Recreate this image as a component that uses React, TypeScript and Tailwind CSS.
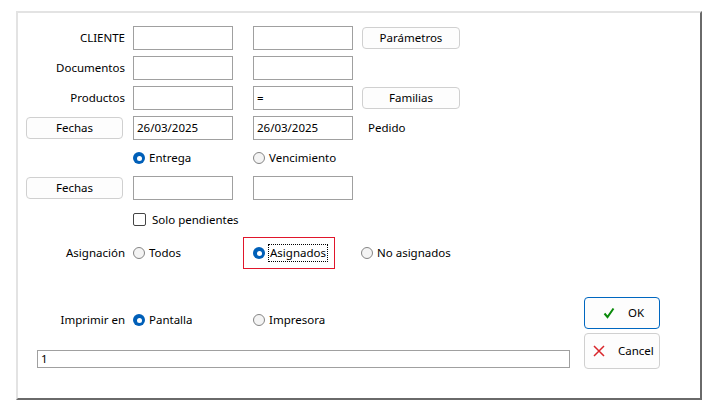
import React from "react";

const Label = ({ children }: { children: React.ReactNode }) => (
  <div className="w-[99px] mr-[8px] text-right shrink-0">{children}</div>
);

const Field = ({ value = "", w = "w-[100px]" }: { value?: string; w?: string }) => (
  <div className={`${w} h-[24px] border border-[#a0a0a0] bg-white pl-[3px] flex items-center shrink-0`}>
    {value}
  </div>
);

const Btn = ({ children, className = "" }: { children: React.ReactNode; className?: string }) => (
  <div
    className={`h-[22px] rounded-[4px] border border-[#d0d0d0] bg-[#fdfdfd] flex items-center justify-center shrink-0 ${className}`}
  >
    {children}
  </div>
);

const Radio = ({ checked, label, focus }: { checked?: boolean; label: string; focus?: boolean }) => (
  <div className="flex items-center">
    {checked ? (
      <span className="w-[12px] h-[12px] rounded-full bg-[#005fb8] flex items-center justify-center">
        <span className="w-[5px] h-[5px] rounded-full bg-white" />
      </span>
    ) : (
      <span className="w-[12px] h-[12px] rounded-full border border-[#858585] bg-[#f4f4f4]" />
    )}
    <span className={`ml-[3px] leading-[16px] ${focus ? "border border-dotted border-black px-[1px]" : "ml-[4px]"}`}>
      {label}
    </span>
  </div>
);

export default function App() {
  return (
    <div
      className="w-[717px] h-[408px] bg-white text-[11.5px] text-[#000] overflow-hidden"
      style={{ fontFamily: '"Noto Sans", "Open Sans", sans-serif' }}
    >
      <div className="ml-[16px] mt-[11px] w-[686px] h-[389px] border-2 border-[#e3e3e3] border-r-[#6a6a6a] border-b-[#6a6a6a]">
        <div className="pl-[8px] pt-[13px]">
          {/* Cliente */}
          <div className="flex items-center h-[24px]">
            <Label>CLIENTE</Label>
            <Field />
            <div className="ml-[20px]">
              <Field />
            </div>
            <Btn className="ml-[9px] w-[98px]">Parámetros</Btn>
          </div>
          {/* Documentos */}
          <div className="flex items-center h-[24px] mt-[6px]">
            <Label>Documentos</Label>
            <Field />
            <div className="ml-[20px]">
              <Field />
            </div>
          </div>
          {/* Productos */}
          <div className="flex items-center h-[24px] mt-[6px]">
            <Label>Productos</Label>
            <Field />
            <div className="ml-[20px]">
              <Field value="=" />
            </div>
            <Btn className="ml-[9px] w-[98px]">Familias</Btn>
          </div>
          {/* Fechas 1 */}
          <div className="flex items-center h-[24px] mt-[6px]">
            <Btn className="w-[97px] mr-[10px]">Fechas</Btn>
            <Field value="26/03/2025" />
            <div className="ml-[20px]">
              <Field value="26/03/2025" />
            </div>
            <span className="ml-[15px]">Pedido</span>
          </div>
          {/* Entrega / Vencimiento */}
          <div className="flex items-center h-[16px] mt-[10px] pl-[107px]">
            <div className="w-[120px]">
              <Radio checked label="Entrega" />
            </div>
            <Radio label="Vencimiento" />
          </div>
          {/* Fechas 2 */}
          <div className="flex items-center h-[24px] mt-[10px]">
            <Btn className="w-[97px] mr-[10px]">Fechas</Btn>
            <Field />
            <div className="ml-[20px]">
              <Field />
            </div>
          </div>
          {/* Solo pendientes */}
          <div className="flex items-center h-[17px] mt-[11px] pl-[107px]">
            <span className="w-[13px] h-[13px] rounded-[2px] border-[1.5px] border-[#444] bg-white" />
            <span className="ml-[6px]">Solo pendientes</span>
          </div>
          {/* Asignacion */}
          <div className="flex items-center h-[32px] mt-[9px]">
            <Label>Asignación</Label>
            <div className="w-[110px]">
              <Radio label="Todos" />
            </div>
            <div className="w-[92px] h-[32px] border border-[#e0162b] pl-[9px] flex items-center">
              <Radio checked focus label="Asignados" />
            </div>
            <div className="ml-[26px]">
              <Radio label="No asignados" />
            </div>
          </div>
          {/* Bottom */}
          <div className="flex mt-[28px]">
            <div className="w-[544px]">
              <div className="flex items-center h-[16px] mt-[15px]">
                <Label>Imprimir en</Label>
                <div className="w-[120px]">
                  <Radio checked label="Pantalla" />
                </div>
                <Radio label="Impresora" />
              </div>
              <div className="ml-[11px] mt-[22px] w-[533px] h-[18px] border border-[#a0a0a0] pl-[3px] flex items-center">
                1
              </div>
            </div>
            <div className="ml-[14px] w-[76px] flex flex-col gap-[4px]">
              <div className="h-[32px] rounded-[4px] border border-[#0067c0] bg-[#fdfdfd] flex items-center pl-[18px]">
                <svg width="12" height="12" viewBox="0 0 12 12">
                  <path d="M1.5 6.5 L4.5 10 L10.5 1.5" fill="none" stroke="#0a8a0a" strokeWidth="2" />
                </svg>
                <span className="ml-[13px]">OK</span>
              </div>
              <div className="h-[36px] rounded-[4px] border border-[#d0d0d0] bg-[#fdfdfd] flex items-center pl-[8px]">
                <svg width="12" height="12" viewBox="0 0 12 12">
                  <path d="M1 1 L11 11 M11 1 L1 11" fill="none" stroke="#d9262b" strokeWidth="1.5" />
                </svg>
                <span className="ml-[13px]">Cancel</span>
              </div>
            </div>
          </div>
        </div>
      </div>
    </div>
  );
}
